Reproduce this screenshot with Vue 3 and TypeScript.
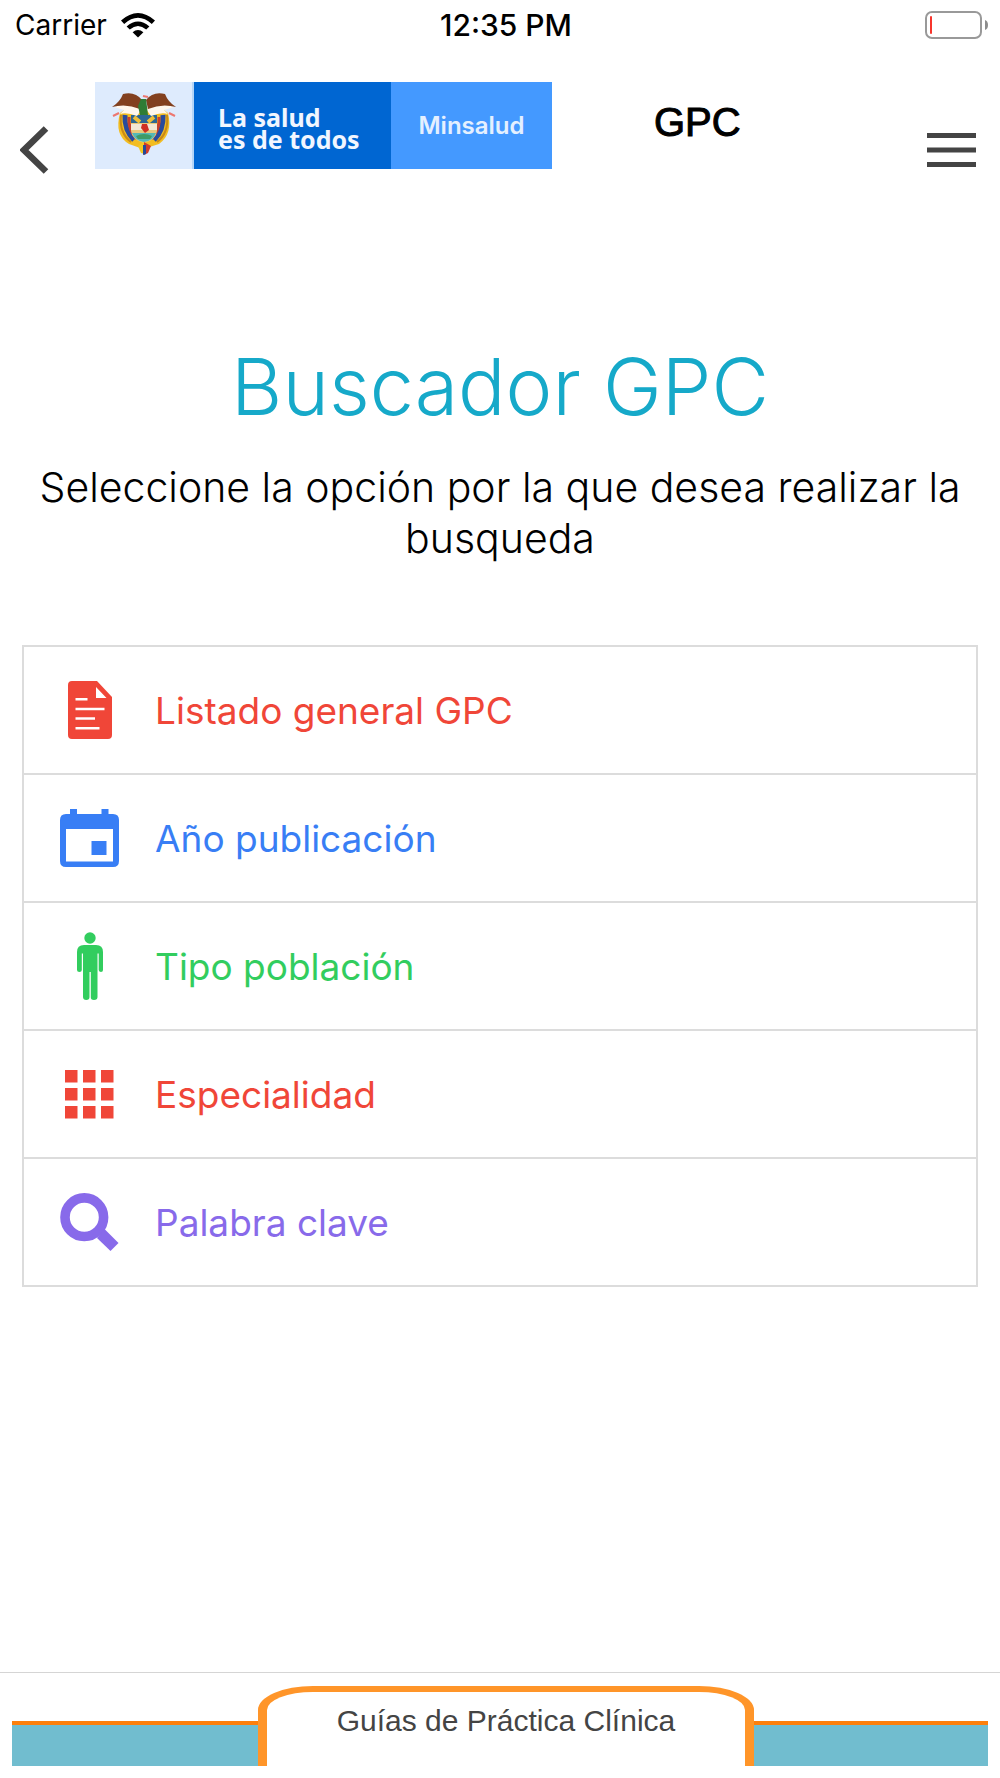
<script setup lang="ts">
type IconName = 'paper' | 'calendar' | 'man' | 'grid' | 'search'

interface SearchOption {
  label: string
  icon: IconName
  color: string
}

const options: SearchOption[] = [
  { label: 'Listado general GPC', icon: 'paper', color: 'red' },
  { label: 'Año publicación', icon: 'calendar', color: 'blue' },
  { label: 'Tipo población', icon: 'man', color: 'green' },
  { label: 'Especialidad', icon: 'grid', color: 'red' },
  { label: 'Palabra clave', icon: 'search', color: 'purple' },
]

const cells: number[] = [0, 18, 36]
</script>

<template>
  <div class="page">
    <div class="status">
      <div class="carrier">
        <span>Carrier</span>
        <svg class="wifi" width="34" height="25" viewBox="0 0 34 25" aria-hidden="true">
          <path d="M0 7.6Q17-7.4 34 7.6L30.8 10.9Q17-1.2 3.2 10.9Z" />
          <path d="M5.6 13.4Q17 3.4 28.4 13.4L25.2 16.6Q17 9.4 8.8 16.6Z" />
          <path d="M11.6 19.2Q17 14.6 22.4 19.2L17 24.6Z" />
        </svg>
      </div>
      <time class="clock">12:35 PM</time>
      <div class="power">
        <svg width="64" height="28" viewBox="0 0 64 28" aria-hidden="true">
          <rect x="1" y="1" width="55" height="26" rx="6" fill="none" stroke="#999" stroke-width="2" />
          <rect x="5" y="5" width="2" height="18" rx="1" fill="#f7352c" />
          <path d="M60 9Q63 10 63 14T60 19Z" fill="#8c8c8c" />
        </svg>
      </div>
    </div>

    <header class="header">
      <button class="bare back" type="button" aria-label="Volver">
        <svg width="30" height="50" viewBox="0 0 30 50" aria-hidden="true">
          <path d="M26 3.5L4 25L26 46.500" fill="none" stroke="#444" stroke-width="6.500" />
        </svg>
      </button>
      <div class="brand">
        <div class="crest">
          <svg width="66" height="63" viewBox="0 0 66 63" aria-hidden="true">
            <path d="M9 20Q3 42 18 51L32 56L48 51Q62 41 57 20L50 15L16 15Z" fill="#f2bd22" />
            <path d="M10 22Q8 40 20 49M56 22Q58 40 46 49" fill="none" stroke="#c98a16" stroke-width="2" />
            <path d="M14 22Q13 37 23 47M52 22Q53 37 43 47" fill="none" stroke="#294b9c" stroke-width="5" />
            <path d="M18 24Q17 37 26 46M48 24Q49 37 40 46" fill="none" stroke="#c63f2d" stroke-width="3" />
            <path d="M20 22H46V38Q45 47 33 50Q21 47 20 38Z" fill="#e8c87c" />
            <path d="M20 22H46V30H20Z" fill="#2c6794" />
            <path d="M23 24L29 29M43 24L37 29" stroke="#f0be36" stroke-width="4" />
            <path d="M20 31H46V37H20Z" fill="#f2e7d5" />
            <path d="M31 31H36L38 37L34 40L30 35Z" fill="#cf3024" />
            <path d="M21 40H45Q42 48 33 49Q24 48 21 40Z" fill="#55b8b7" />
            <path d="M25 43Q33 39 41 43L39 46H27Z" fill="#3f9b67" />
            <path d="M3 14Q17 9 31 16L26 23Q16 19 9 21L13 17ZM63 14Q49 9 35 16L40 23Q50 19 57 21L53 17Z" fill="#fff7ed" />
            <path d="M31 7Q24-2 12 1Q9 9 1 14Q15 10 29 16ZM35 7Q42-2 54 1Q57 9 65 14Q51 10 37 16Z" fill="#82401f" />
            <path d="M30 6L35 6L37 22L29 22L27 13Z" fill="#2f7c35" />
            <path d="M2 23L8 20M64 23L58 20M32 3L37 4" stroke="#ed7770" stroke-width="2" />
            <path d="M27 53L33 49L34 61L30 60Z" fill="#f2c923" />
            <path d="M33 49L40 53L37 60L33 62Z" fill="#cf3b2c" />
            <path d="M32 52L35 52L35 61L32 62Z" fill="#244999" />
          </svg>
        </div>
        <div class="slogan">La salud<br />es de todos</div>
        <div class="ministry">Minsalud</div>
      </div>
      <div class="app-name">GPC</div>
      <button class="bare menu" type="button" aria-label="Menú">
        <svg width="49" height="34" viewBox="0 0 49 34" aria-hidden="true">
          <path d="M0 2.500H49M0 17H49M0 31.500H49" stroke="#444" stroke-width="5" />
        </svg>
      </button>
    </header>

    <main class="content">
      <h1>Buscador GPC</h1>
      <p class="hint">Seleccione la opción por la que desea realizar la busqueda</p>
      <ul class="options">
        <li v-for="option in options" :key="option.label">
          <button class="bare option" :class="option.color" type="button">
            <span class="icon">
              <svg v-if="option.icon === 'paper'" width="44" height="58" viewBox="0 0 44 58" aria-hidden="true">
                <path
                  fill-rule="evenodd"
                  d="M4 0H29L44 16V54Q44 58 40 58H4Q0 58 0 54V4Q0 0 4 0ZM28 6V17H38.500ZM7.500 17V19.500H19.500V17ZM7.500 26.800V29.200H36.500V26.800ZM7.500 36.300V38.800H27V36.300ZM7.500 46V48.500H31.500V46Z"
                />
              </svg>
              <svg v-else-if="option.icon === 'calendar'" width="59" height="58" viewBox="0 0 59 58" aria-hidden="true">
                <path
                  fill-rule="evenodd"
                  d="M10 0H17V5H41.500V0H48.500V5H53Q59 5 59 11V52Q59 58 53 58H6Q0 58 0 52V11Q0 5 6 5H10ZM6 20V52.500H53V20Z"
                />
                <path d="M31.500 32H46.500V46H31.500Z" />
              </svg>
              <svg v-else-if="option.icon === 'man'" width="26" height="68" viewBox="0 0 26 68" aria-hidden="true">
                <circle cx="13" cy="6" r="5.700" />
                <path
                  d="M7 13H19Q26 13 26 20V38Q26 40 24 40T21.700 38V21.500H20.500V65Q20.500 68 17 68T13.800 65V40H12.500V65Q12.500 68 9.300 68T6 65V21.500H4.800V38Q4.800 40 2.400 40T0 38V20Q0 13 7 13Z"
                />
              </svg>
              <svg v-else-if="option.icon === 'grid'" width="49" height="49" viewBox="0 0 49 49" aria-hidden="true">
                <template v-for="y in cells" :key="y">
                  <rect v-for="x in cells" :key="x" :x="x" :y="y" width="12.500" height="12.500" />
                </template>
              </svg>
              <svg v-else width="59" height="58" viewBox="0 0 59 58" aria-hidden="true">
                <circle cx="24.300" cy="24.200" r="19.300" fill="none" stroke="currentColor" stroke-width="9.600" />
                <path d="M37 45L44.500 36L58.500 50L50.500 58Z" />
              </svg>
            </span>
            <span>{{ option.label }}</span>
          </button>
        </li>
      </ul>
    </main>

    <footer class="footer">
      <div class="bar"></div>
      <div class="tab">Guías de Práctica Clínica</div>
      <div class="bar"></div>
    </footer>
  </div>
</template>

<style>
body {
  margin: 0;
  background: #fff;
}
</style>

<style scoped>
.page {
  display: flex;
  flex-direction: column;
  min-height: 100vh;
  background: #fff;
  color: #000;
  font-family: Inter, Roboto, sans-serif;
}

.bare {
  margin: 0;
  padding: 0;
  border: 0;
  background: none;
  font: inherit;
  cursor: pointer;
}

svg {
  display: block;
}

.status {
  display: grid;
  grid-template-columns: 1fr auto 1fr;
  align-items: center;
  height: 50px;
  padding: 0 11px 0 15px;
  font-size: 28px;
}

.carrier {
  display: flex;
  align-items: center;
  gap: 14px;
}

.clock {
  font-size: 30px;
  font-weight: 500;
  padding-left: 8px;
}

.power {
  display: flex;
  justify-content: flex-end;
}

.header {
  display: flex;
  align-items: flex-start;
  padding: 32px 24px 0 20px;
}

.back {
  padding-top: 43px;
}

.brand {
  display: flex;
  flex: none;
  height: 87px;
  margin-left: 45px;
}

.crest {
  box-sizing: border-box;
  width: 99px;
  padding: 11px 0 0 16px;
  background: #deebfd;
  border-right: 2px solid #b5d5f7;
}

.slogan {
  box-sizing: border-box;
  width: 197px;
  padding: 24px 0 0 24px;
  background: #0066d2;
  color: #f1f6ff;
  font: 700 25px/22px "Noto Sans", sans-serif;
}

.ministry {
  width: 161px;
  background: #4499ff;
  color: #e4f0ff;
  font-size: 24px;
  font-weight: 600;
  line-height: 87px;
  text-align: center;
}

.app-name {
  flex: 1;
  padding: 17px 0 0 102px;
  font: 40px/46px "Liberation Sans", Arial, sans-serif;
  -webkit-text-stroke: 1px #000;
}

.menu {
  padding-top: 51px;
}

.content {
  flex: 1;
  padding: 156px 22px 40px;
}

h1 {
  margin: 0;
  color: #16a9c9;
  font-size: 79px;
  font-weight: 300;
  line-height: 110px;
  text-align: center;
}

.hint {
  margin: 21px 0 0;
  font-size: 41px;
  font-weight: 300;
  line-height: 51px;
  text-align: center;
}

.options {
  margin: 81px 0 0;
  padding: 0;
  border: 2px solid #dcdcdc;
  list-style: none;
}

.options li + li {
  border-top: 2px solid #dcdcdc;
}

.option {
  display: flex;
  align-items: center;
  gap: 34px;
  width: 100%;
  height: 126px;
  padding-left: 34px;
  font-size: 37px;
  text-align: left;
}

.icon {
  display: flex;
  flex: none;
  justify-content: center;
  width: 63px;
}

.icon svg {
  fill: currentColor;
}

.red {
  color: #f04638;
}

.blue {
  color: #387ef5;
}

.green {
  color: #32cd5e;
}

.purple {
  color: #886aea;
}

.footer {
  display: grid;
  grid-template-columns: 246fr 496px 234fr;
  align-items: end;
  padding: 13px 12px 12px;
  border-top: 1px solid #d5d5d5;
}

.bar {
  height: 41px;
  border-top: 4px solid #fd7f0b;
  background: #71bdcf;
}

.tab {
  box-sizing: border-box;
  height: 80px;
  border: solid #ff9529;
  border-width: 6px 9px 0;
  border-radius: 55px 55px 0 0 / 24px 24px 0 0;
  color: #444;
  font: 30px/58px "Liberation Sans", Arial, sans-serif;
  text-align: center;
}
</style>
